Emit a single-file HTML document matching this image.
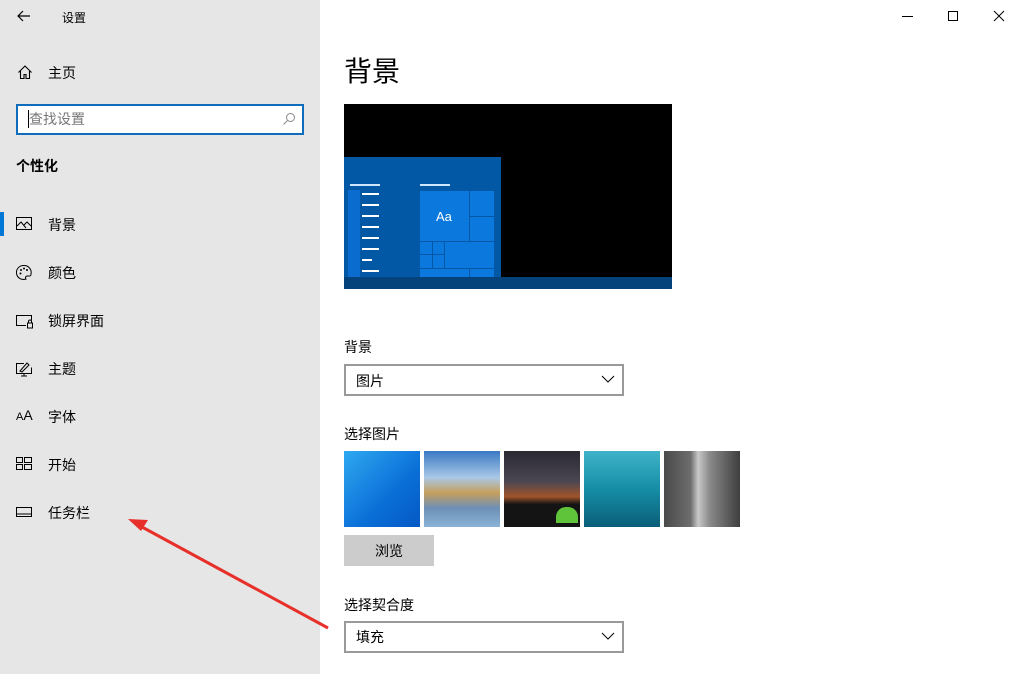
<!DOCTYPE html>
<html><head><meta charset="utf-8"><style>
*{margin:0;padding:0;box-sizing:border-box}
body{width:1022px;height:674px;position:relative;overflow:hidden;background:#fff;font-family:"Liberation Sans","Noto Sans CJK SC",sans-serif;color:#000}
.a{position:absolute}
.side{left:0;top:0;width:320px;height:674px;background:#e6e6e6}
.t{font-size:14px;line-height:16px}
.ic{position:absolute;left:16px}
</style></head><body>
<div class="a side"></div>
<svg class="a" style="left:16px;top:9px" width="16" height="14"><path d="M14 7H2M7 2L2 7l5 5" stroke="#000" fill="none" stroke-width="1.2"/></svg>
<div class="a" style="left:62px;top:9px;font-size:12px">设置</div>
<svg class="a" style="left:17px;top:64px" width="16" height="16"><path d="M1.5 8.5L8 2l6.5 6.5M3.5 7v7.5h3.5v-4h2v4h3.5V7" stroke="#000" fill="none" stroke-width="1.1"/></svg>
<div class="a t" style="left:48px;top:65px">主页</div>
<div class="a" style="left:16px;top:104px;width:288px;height:31px;border:2px solid #0f6cbd;background:#fff"></div>
<div class="a" style="left:28px;top:110px;width:1px;height:18px;background:#000"></div>
<div class="a t" style="left:29px;top:111px;color:#777">查找设置</div>
<svg class="a" style="left:282px;top:112px" width="14" height="14"><circle cx="8.5" cy="5.5" r="4" stroke="#888" fill="none"/><path d="M5.5 8.5L1.5 12.5" stroke="#888"/></svg>
<div class="a t" style="left:16px;top:158px;font-weight:bold">个性化</div>
<div class="a" style="left:0;top:212px;width:4px;height:24px;background:#0078d7"></div>
<svg class="ic" style="top:216px" width="18" height="16"><rect x="0.5" y="1.5" width="15" height="12" stroke="#000" fill="none"/><path d="M1 10l4-4 5 6M8 9l3-3 4 4" stroke="#000" fill="none"/></svg>
<div class="a t" style="left:48px;top:217px">背景</div>
<svg class="ic" style="top:264px" width="18" height="17"><path d="M8 1.5a7 7 0 1 0 2 13.5c-1-1-.5-3 1.5-3h2.5a2 2 0 0 0 1-2A7 7 0 0 0 8 1.5z" stroke="#000" fill="none"/><circle cx="5" cy="6" r="1"/><circle cx="8" cy="4.5" r="1"/><circle cx="11" cy="6" r="1"/><circle cx="4.5" cy="9.5" r="1"/></svg>
<div class="a t" style="left:48px;top:265px">颜色</div>
<svg class="ic" style="top:313px" width="18" height="16"><path d="M10 12.5H0.5v-10h15v5" stroke="#000" fill="none"/><rect x="11.5" y="10" width="5" height="5" stroke="#000" fill="none"/><path d="M12.5 10V8.5a1.5 1.5 0 0 1 3 0V10" stroke="#000" fill="none"/></svg>
<div class="a t" style="left:48px;top:313px">锁屏界面</div>
<svg class="ic" style="top:360px" width="18" height="17"><path d="M8 3.5H0.5v10h15v-6M8 13.5v2.5M5 16h6M4 11l7-8 2 2-7 7z" stroke="#000" fill="none"/></svg>
<div class="a t" style="left:48px;top:361px">主题</div>
<div class="a" style="left:16px;top:407px;font-size:11px">A<span style="font-size:14px">A</span></div>
<div class="a t" style="left:48px;top:409px">字体</div>
<svg class="ic" style="top:457px" width="18" height="15"><rect x="0.5" y="0.5" width="6" height="5" stroke="#000" fill="none"/><rect x="8.5" y="0.5" width="7" height="5" stroke="#000" fill="none"/><rect x="0.5" y="7.5" width="6" height="5" stroke="#000" fill="none"/><rect x="8.5" y="7.5" width="7" height="5" stroke="#000" fill="none"/></svg>
<div class="a t" style="left:48px;top:457px">开始</div>
<svg class="ic" style="top:507px" width="18" height="12"><rect x="0.5" y="0.5" width="15" height="9" stroke="#000" fill="none"/><path d="M1 7h14" stroke="#000"/></svg>
<div class="a t" style="left:48px;top:505px">任务栏</div>
<svg class="a" style="left:0;top:0" width="1022" height="674"><path d="M328 628L142 527" stroke="#e8302a" stroke-width="3"/><path d="M128 519l20 1-7 11z" fill="#e8302a"/></svg>
<!-- window controls -->
<div class="a" style="left:902px;top:16px;width:11px;height:1px;background:#000"></div>
<div class="a" style="left:948px;top:11px;width:10px;height:10px;border:1px solid #000"></div>
<svg class="a" style="left:993px;top:10px" width="12" height="12"><path d="M1 1l10 10M11 1L1 11" stroke="#000"/></svg>
<div class="a" style="left:344px;top:52px;font-size:28px;line-height:40px">背景</div>
<!-- preview -->
<div class="a" style="left:344px;top:104px;width:328px;height:185px;background:#000"></div>
<div class="a" style="left:344px;top:157px;width:157px;height:120px;background:#0358a5"></div>
<div class="a" style="left:344px;top:277px;width:328px;height:12px;background:#03427a"></div>
<div class="a" style="left:350px;top:184px;width:30px;height:2px;background:#cfe6ff"></div>
<div class="a" style="left:420px;top:184px;width:30px;height:2px;background:#cfe6ff"></div>
<div class="a" style="left:348px;top:190px;width:12px;height:87px;background:#0a6ccf"></div>
<div class="a" style="left:362px;top:193px;width:17px;height:2px;background:#fff;box-shadow:0 11px #fff,0 22px #fff,0 33px #fff,0 44px #fff,0 55px #fff,0 77px #fff"></div>
<div class="a" style="left:362px;top:259px;width:10px;height:2px;background:#fff"></div>
<div class="a" style="left:420px;top:191px;width:74px;height:86px;background:#0a78dc"></div>
<div class="a" style="left:469px;top:191px;width:1px;height:50px;background:#0358a5"></div>
<div class="a" style="left:469px;top:216px;width:25px;height:1px;background:#0358a5"></div>
<div class="a" style="left:420px;top:241px;width:74px;height:1px;background:#0358a5"></div>
<div class="a" style="left:420px;top:268px;width:74px;height:1px;background:#0358a5"></div>
<div class="a" style="left:432px;top:241px;width:1px;height:27px;background:#0358a5"></div>
<div class="a" style="left:444px;top:241px;width:1px;height:27px;background:#0358a5"></div>
<div class="a" style="left:420px;top:254px;width:24px;height:1px;background:#0358a5"></div>
<div class="a" style="left:469px;top:268px;width:1px;height:9px;background:#0358a5"></div>
<div class="a" style="left:436px;top:209px;color:#fff;font-size:13px">Aa</div>
<div class="a t" style="left:344px;top:339px">背景</div>
<div class="a" style="left:344px;top:364px;width:280px;height:32px;border:2px solid #999"></div>
<div class="a t" style="left:356px;top:373px">图片</div>
<svg class="a" style="left:601px;top:375px" width="14" height="9"><path d="M1 1l6 6 6-6" stroke="#000" fill="none"/></svg>
<div class="a t" style="left:344px;top:426px">选择图片</div>
<div class="a" style="left:344px;top:451px;width:76px;height:76px;background:linear-gradient(135deg,#2fa8f0,#0a6fd8 60%,#0558c4)"></div>
<div class="a" style="left:424px;top:451px;width:76px;height:76px;background:linear-gradient(180deg,#3a79c4,#a9c8e6 35%,#c79f5c 55%,#6d90b6 75%,#8ab3d7)"></div>
<div class="a" style="left:504px;top:451px;width:76px;height:76px;background:linear-gradient(180deg,#2a2a33,#4a4652 40%,#a0542a 60%,#141414 70%)"></div>
<div class="a" style="left:556px;top:507px;width:22px;height:16px;background:#5fc43a;border-radius:10px 10px 0 0"></div>
<div class="a" style="left:584px;top:451px;width:76px;height:76px;background:linear-gradient(180deg,#3fb3c8,#168ea6 50%,#0a5e78)"></div>
<div class="a" style="left:664px;top:451px;width:76px;height:76px;background:linear-gradient(90deg,#4a4a4a,#6d6d6d 35%,#c8c8c8 45%,#8a8a8a 60%,#3e3e3e)"></div>
<div class="a" style="left:344px;top:535px;width:90px;height:31px;background:#ccc"></div>
<div class="a t" style="left:375px;top:543px">浏览</div>
<div class="a t" style="left:344px;top:597px">选择契合度</div>
<div class="a" style="left:344px;top:621px;width:280px;height:32px;border:2px solid #999"></div>
<div class="a t" style="left:356px;top:629px">填充</div>
<svg class="a" style="left:601px;top:632px" width="14" height="9"><path d="M1 1l6 6 6-6" stroke="#000" fill="none"/></svg>
</body></html>
